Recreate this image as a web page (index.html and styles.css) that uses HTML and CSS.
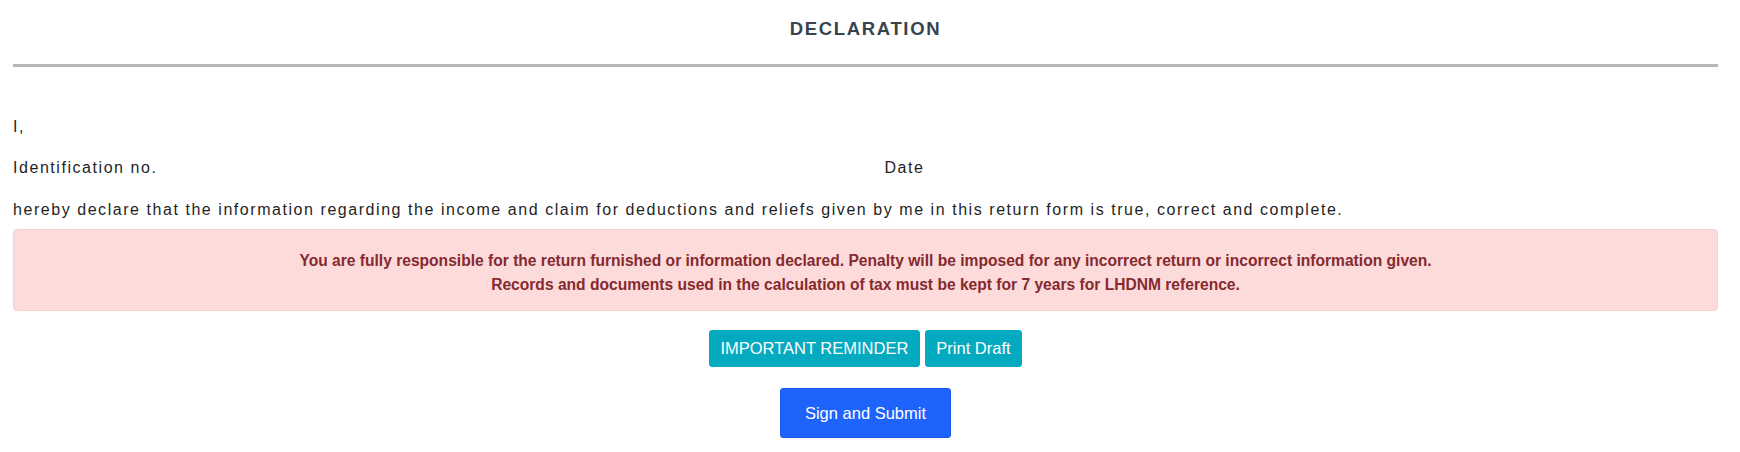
FILE: index.html
```html
<!DOCTYPE html>
<html lang="en">
<head>
<meta charset="utf-8">
<title>Declaration</title>
<link rel="stylesheet" href="styles.css">
</head>
<body>
<div class="page">
  <div class="section-head">
    <h2 class="section-title">DECLARATION</h2>
  </div>
  <hr class="divider">
  <div class="decl">
    <div class="decl-row">I,</div>
    <div class="decl-row decl-grid">
      <div class="decl-cell">Identification no.</div>
      <div class="decl-cell decl-date">Date</div>
    </div>
    <div class="decl-row">hereby declare that the information regarding the income and claim for deductions and reliefs given by me in this return form is true, correct and complete.</div>
  </div>
  <div class="alert">
    <p class="alert-line">You are fully responsible for the return furnished or information declared. Penalty will be imposed for any incorrect return or incorrect information given.</p>
    <p class="alert-line">Records and documents used in the calculation of tax must be kept for 7 years for LHDNM reference.</p>
  </div>
  <div class="actions">
    <button class="btn btn-info" type="button">IMPORTANT REMINDER</button>
    <button class="btn btn-info" type="button">Print Draft</button>
  </div>
  <div class="submit-row">
    <button class="btn btn-primary" type="button">Sign and Submit</button>
  </div>
</div>
</body>
</html>
```

FILE: styles.css
```css
* {
  box-sizing: border-box;
}

html, body {
  margin: 0;
  padding: 0;
  background: #ffffff;
}

body {
  font-family: "Liberation Sans", Arial, sans-serif;
  color: #1f1f1f;
}

.page {
  padding: 0 22px 0 13px;
}

.section-head {
  padding-top: 17px;
  text-align: center;
}

.section-title {
  margin: 0;
  font-size: 18.5px;
  line-height: 24px;
  font-weight: 700;
  letter-spacing: 1.65px;
  color: #374450;
}

.divider {
  margin: 23px 0 0;
  border: 0;
  height: 3px;
  background: #b7b7b7;
}

.decl {
  margin-top: 47.5px;
  display: flex;
  flex-direction: column;
  gap: 17.5px;
  font-size: 16px;
  line-height: 24px;
  letter-spacing: 1.55px;
  color: #1f1f1f;
}

.decl-grid {
  display: grid;
  grid-template-columns: 1fr 1fr;
}

.decl-date {
  padding-left: 19px;
}

.alert {
  margin-top: 7.5px;
  padding: 18.5px 16px 13.5px;
  background: #fddbdb;
  border: 1px solid #f9d0d0;
  border-radius: 4px;
  text-align: center;
  color: #852a2e;
  font-weight: 700;
  font-size: 15.6px;
  line-height: 24px;
}

.alert-line {
  margin: 0;
}

.actions {
  margin-top: 19px;
  display: flex;
  justify-content: center;
  gap: 5px;
}

.submit-row {
  margin-top: 20.5px;
  display: flex;
  justify-content: center;
}

.btn {
  font-family: "Liberation Sans", Arial, sans-serif;
  font-size: 16.5px;
  color: #ffffff;
  border-radius: 3px;
  cursor: pointer;
  margin: 0;
}

.btn-info {
  background: #04aabf;
  border: 1px solid #04aabf;
  padding: 6px 10.5px;
  line-height: 23px;
}

.btn-primary {
  background: #1f63fd;
  border: 1px solid #1a5ae8;
  padding: 12px 24px;
  line-height: 24px;
}
```
